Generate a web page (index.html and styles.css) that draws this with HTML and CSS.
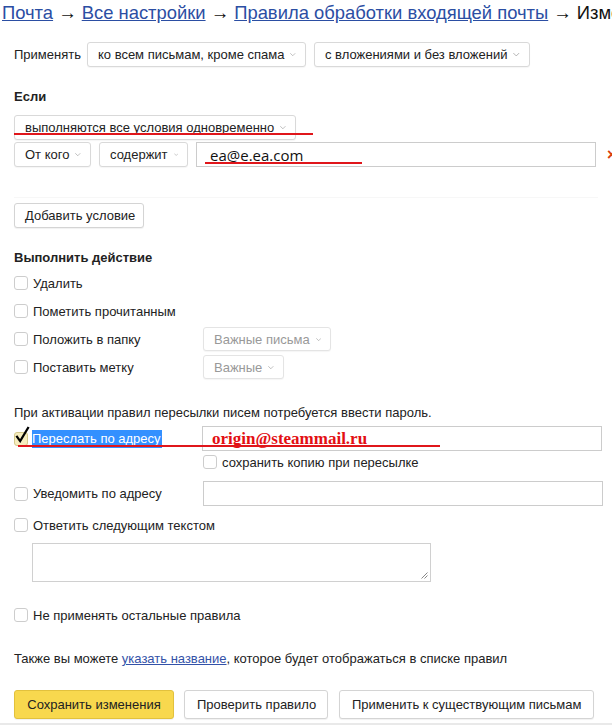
FILE: index.html
```html
<!DOCTYPE html>
<html lang="ru">
<head>
  <meta charset="UTF-8">
  <title>Правила обработки входящей почты</title>
  <link rel="stylesheet" href="styles.css">
</head>
<body>
  <div class="crumbs">
    <a href="#">Почта</a> → <a href="#">Все настройки</a> → <a href="#">Правила обработки входящей почты</a> → Изменение правила
  </div>

  <div class="page">
    <div class="row apply">
      <span class="label">Применять</span>
      <span class="select w-spam">ко всем письмам, кроме спама <svg class="arr" viewBox="0 0 9 5"><polyline points="0.5,0.5 4.5,4.5 8.5,0.5"/></svg></span>
      <span class="select w-attach">с вложениями и без вложений <svg class="arr" viewBox="0 0 9 5"><polyline points="0.5,0.5 4.5,4.5 8.5,0.5"/></svg></span>
    </div>

    <h3 class="head if-head">Если</h3>
    <div class="row marked">
      <span class="select w-all">выполняются все условия одновременно <svg class="arr" viewBox="0 0 9 5"><polyline points="0.5,0.5 4.5,4.5 8.5,0.5"/></svg></span>
      <span class="redline line-all"></span>
    </div>
    <div class="row cond marked">
      <span class="select w-from">От кого <svg class="arr" viewBox="0 0 9 5"><polyline points="0.5,0.5 4.5,4.5 8.5,0.5"/></svg></span>
      <span class="select w-has">содержит <svg class="arr" viewBox="0 0 9 5"><polyline points="0.5,0.5 4.5,4.5 8.5,0.5"/></svg></span>
      <span class="input w-mail"><span class="mail">ea@e.ea.com</span></span>
      <span class="remove">×</span>
      <span class="redline line-mail"></span>
    </div>
    <div class="sep"></div>

    <button class="btn add">Добавить условие</button>

    <h3 class="head act-head">Выполнить действие</h3>
    <div class="actions">
      <div class="crow"><span class="box"></span>Удалить</div>
      <div class="crow"><span class="box"></span>Пометить прочитанным</div>
      <div class="crow"><span class="box"></span><span class="ctext">Положить в папку</span><span class="select disabled w-folder">Важные письма <svg class="arr" viewBox="0 0 9 5"><polyline points="0.5,0.5 4.5,4.5 8.5,0.5"/></svg></span></div>
      <div class="crow"><span class="box"></span><span class="ctext">Поставить метку</span><span class="select disabled w-label">Важные <svg class="arr" viewBox="0 0 9 5"><polyline points="0.5,0.5 4.5,4.5 8.5,0.5"/></svg></span></div>
    </div>

    <p class="note">При активации правил пересылки писем потребуется ввести пароль.</p>

    <div class="crow fwd marked">
      <span class="box checked"><svg class="tick" viewBox="0 0 16 18"><path d="M1.5 10.5 L5.5 16 L14.5 1"/></svg></span>
      <span class="ctext"><span class="sel">Переслать по адресу</span></span>
      <span class="input w-wide"><span class="stamp">origin@steammail.ru</span></span>
      <span class="redline line-fwd"></span>
    </div>
    <div class="crow sub"><span class="box"></span>сохранить копию при пересылке</div>

    <div class="crow notify">
      <span class="box"></span><span class="ctext">Уведомить по адресу</span>
      <span class="input w-wide"></span>
    </div>
    <div class="crow reply"><span class="box"></span>Ответить следующим текстом</div>
    <div class="textarea">
      <svg class="grip" viewBox="0 0 8 8"><path d="M7.5 1.5 L1.5 7.5 M7.5 4.5 L4.5 7.5"/></svg>
    </div>

    <div class="crow stop"><span class="box"></span>Не применять остальные правила</div>

    <p class="name-note">Также вы можете <a href="#">указать название</a>, которое будет отображаться в списке правил</p>

    <div class="buttons">
      <button class="btn yellow">Сохранить изменения</button>
      <button class="btn">Проверить правило</button>
      <button class="btn">Применить к существующим письмам</button>
    </div>
  </div>
  <div class="bottom-line"></div>
</body>
</html>
```

FILE: styles.css
```css
body { margin: 0; font-family: "Liberation Sans", Arial, sans-serif; font-size: 13px; color: #222; background: #fff; width: 612px; overflow: hidden; }
a { color: #2a4c9e; }

.crumbs { font-size: 18.4px; line-height: 26px; padding-left: 2px; white-space: nowrap; overflow: hidden; color: #111; }
.crumbs a { color: #2b4ea3; }

.page { padding: 0 14px; }
.row { display: flex; align-items: center; gap: 8px; }
.row > * { flex: none; }
.marked { position: relative; }
.apply { margin-top: 16px; }
.label { color: #222; margin-right: -2px; }

.select { box-sizing: border-box; display: inline-flex; align-items: center; justify-content: space-between; height: 25px; padding: 0 9px 0 10px; border: 1px solid #d9d9d9; border-radius: 3px; background: #fff; color: #222; white-space: nowrap; box-shadow: 0 1px 1px rgba(0,0,0,.04); }
.select.disabled { color: #999; border-color: #e4e4e4; }
.arr { width: 9px; height: 5px; margin-left: 6px; fill: none; stroke: #999; stroke-width: 1; }
.w-spam { width: 219px; }
.w-attach { width: 216px; }
.w-all { width: 282px; }
.w-from { width: 77px; }
.w-has { width: 89px; }
.w-folder { width: 128px; height: 24px; }
.w-label { width: 81px; height: 24px; }

.head { margin: 0; font-size: 13px; line-height: 18px; font-weight: bold; color: #222; }
.if-head { margin-top: 21px; margin-bottom: 9px; }
.cond { margin-top: 2px; }

.input { box-sizing: border-box; display: inline-flex; align-items: center; height: 25px; border: 1px solid #ccc; background: #fff; flex: none; }
.w-mail { width: 400px; }
.mail { font-family: "Open Sans", "DejaVu Sans", sans-serif; font-size: 15px; color: #111; padding-left: 13px; }
.remove { color: #d9400b; font-size: 16px; font-weight: bold; margin-left: 3px; }
.sep { height: 1px; background: #f7f7f7; margin-top: 30px; }

.redline { position: absolute; height: 2px; background: #e0161b; }
.line-all { left: 0; top: 18px; width: 299px; }
.line-mail { left: 191px; top: 20px; width: 157px; }
.line-fwd { left: 4px; top: 19px; width: 422px; }

.btn { box-sizing: border-box; height: 26px; padding: 0 10px; font: 13px "Liberation Sans", Arial, sans-serif; white-space: nowrap; color: #222; background: #fff; border: 1px solid #d4d4d4; border-radius: 3px; box-shadow: 0 1px 1px rgba(0,0,0,.06); }
.add { display: block; margin-top: 5px; width: 130px; height: 25px; }
.act-head { margin-top: 21px; }

.actions { margin-top: 2px; }
.crow { display: flex; align-items: center; height: 28px; }
.crow > * { flex: none; }
.box { box-sizing: border-box; flex: none; width: 14px; height: 14px; border: 1px solid #cdcdcd; border-radius: 3px; background: #fff; margin-right: 5px; position: relative; }
.ctext { width: 170px; flex: none; }

.note { margin: 23px 0 0; line-height: 18px; }

.fwd { height: 25px; margin-top: 4px; }
.box.checked { background: #f6edbf; border-color: #d5c98c; }
.tick { position: absolute; left: 0; top: -7px; width: 15px; height: 17px; fill: none; stroke: #000; stroke-width: 2.4; }
.fwd .ctext { width: 170px; margin-left: -1px; }
.sel { background: #3390ff; color: #fff; padding: 1px 1px 2px 0; }
.w-wide { width: 400px; }
.stamp { font-family: "Liberation Serif", "Times New Roman", serif; font-weight: bold; font-size: 17px; color: #e30e12; padding-left: 9px; }

.sub { height: 20px; margin-top: 1px; padding-left: 189px; }
.notify { height: 25px; margin-top: 9px; }
.reply { height: 20px; margin-top: 9px; }
.textarea { box-sizing: border-box; position: relative; width: 399px; height: 39px; margin: 8px 0 0 18px; border: 1px solid #d0d0d0; background: #fff; }
.grip { position: absolute; right: 2px; bottom: 2px; width: 8px; height: 8px; stroke: #888; stroke-width: 1; fill: none; }
.stop { height: 20px; margin-top: 23px; }

.name-note { margin: 25px 0 0; line-height: 18px; }
.name-note a { color: #3352a8; }

.buttons { display: flex; gap: 10px; margin-top: 22px; }
.buttons .btn { flex: none; height: 29px; padding: 0 12px; }
.buttons .btn:nth-child(1) { width: 160px; }
.buttons .btn:nth-child(2) { width: 144px; }
.buttons .btn:nth-child(3) { width: 255px; margin-left: 1px; }
.btn.yellow { background: #f8d84e; border-color: #e2c13d; }
.bottom-line { height: 3px; background: #e9e9e9; margin-top: 4px; }
```
